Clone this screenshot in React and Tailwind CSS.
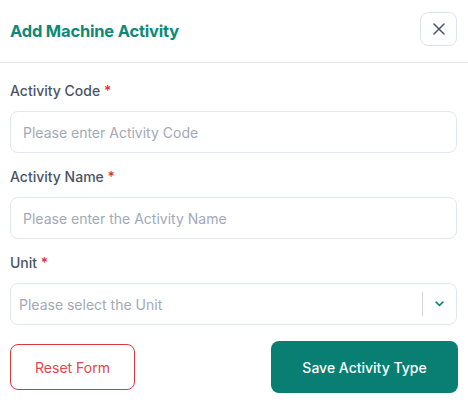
import React from "react";

export default function App() {
  return (
    <div className="w-[468px] h-[403px] bg-white overflow-hidden" style={{ fontFamily: "Inter, 'Noto Sans', sans-serif" }}>
      <div className="h-[63px] flex items-center justify-between pl-[10px] pr-[11px] border-b border-[#e5e7eb]">
        <h2 className="text-[16.5px] font-bold text-[#0d8977] tracking-[-0.2px]">Add Machine Activity</h2>
        <button className="w-[37px] h-[34px] mt-[-4px] rounded-lg border border-[#dfe3ec] flex items-center justify-center text-[#4b5563]">
          <svg width="14" height="14" viewBox="0 0 14 14" fill="none" stroke="currentColor" strokeWidth="1.5" strokeLinecap="round">
            <path d="M2 2L12 12M12 2L2 12" />
          </svg>
        </button>
      </div>
      <div className="px-[10px] pr-[11px] pt-[18px]">
        <label className="block text-[14px] leading-[20px] font-medium text-[#4a5466]">
          Activity Code <span className="text-[#e03131]">*</span>
        </label>
        <input
          className="mt-[10px] w-full h-[42px] rounded-lg border border-[#e2e6ee] px-3 text-[14px] placeholder-[#a3a9b6] outline-none"
          placeholder="Please enter Activity Code"
        />
        <label className="block mt-[14px] text-[14px] leading-[20px] font-medium text-[#4a5466]">
          Activity Name <span className="text-[#e03131]">*</span>
        </label>
        <input
          className="mt-[10px] w-full h-[42px] rounded-lg border border-[#e2e6ee] px-3 text-[14px] placeholder-[#a3a9b6] outline-none"
          placeholder="Please enter the Activity Name"
        />
        <label className="block mt-[14px] text-[14px] leading-[20px] font-medium text-[#4a5466]">
          Unit <span className="text-[#e03131]">*</span>
        </label>
        <div className="mt-[10px] w-full h-[42px] rounded-lg border border-[#e2e6ee] flex items-center pl-[8px]">
          <span className="flex-1 text-[14px] text-[#a3a9b6]">Please select the Unit</span>
          <div className="w-px h-[24px] bg-[#d1d5db]" />
          <div className="w-[33px] flex items-center justify-center text-[#0d8977]">
            <svg width="9" height="6" viewBox="0 0 9 6" fill="none" stroke="currentColor" strokeWidth="1.7" strokeLinecap="round" strokeLinejoin="round">
              <path d="M1.2 1.2L4.5 4.5L7.8 1.2" />
            </svg>
          </div>
        </div>
        <div className="mt-[16px] flex items-center justify-between">
          <button className="w-[125px] h-[46px] rounded-lg border border-[#dc3a3a] text-[#e0474c] text-[14px] font-normal">
            Reset Form
          </button>
          <button className="w-[187px] h-[52px] rounded-lg bg-[#087f72] text-white text-[14px] font-medium mr-[-1px]">
            Save Activity Type
          </button>
        </div>
      </div>
    </div>
  );
}
